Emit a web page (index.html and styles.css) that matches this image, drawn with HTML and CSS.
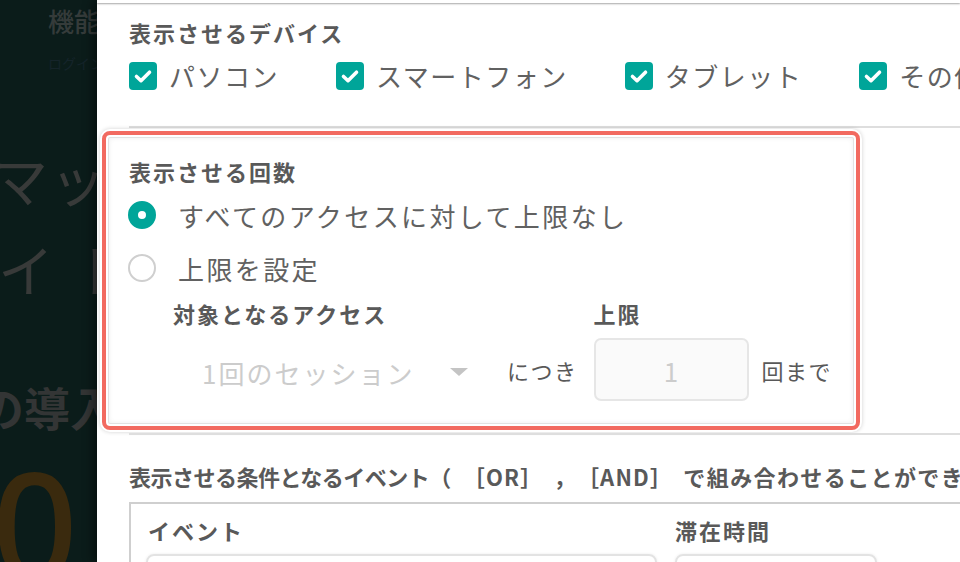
FILE: index.html
```html
<!DOCTYPE html>
<html lang="ja">
<head>
<meta charset="utf-8">
<title>表示設定</title>
<link rel="stylesheet" href="styles.css">
</head>
<body>
<div class="backdrop">
  <div class="bg-title">機能</div>
  <div class="bg-sub">ログイン</div>
  <div class="bg-big bg-l1">マッ</div>
  <div class="bg-big bg-l2">イト</div>
  <div class="bg-bold">の導入</div>
  <div class="bg-num">0</div>
</div>
<main class="panel">
  <div class="panel-top"></div>
  <section class="devices">
    <h2 class="heading">表示させるデバイス</h2>
    <div class="check-row">
      <label class="check"><svg class="box" viewBox="0 0 28 28"><rect width="28" height="28" rx="4"/><path d="M7.5 14.5l4.5 4.2 8.5-8.5"/></svg><span>パソコン</span></label>
      <label class="check"><svg class="box" viewBox="0 0 28 28"><rect width="28" height="28" rx="4"/><path d="M7.5 14.5l4.5 4.2 8.5-8.5"/></svg><span>スマートフォン</span></label>
      <label class="check"><svg class="box" viewBox="0 0 28 28"><rect width="28" height="28" rx="4"/><path d="M7.5 14.5l4.5 4.2 8.5-8.5"/></svg><span>タブレット</span></label>
      <label class="check"><svg class="box" viewBox="0 0 28 28"><rect width="28" height="28" rx="4"/><path d="M7.5 14.5l4.5 4.2 8.5-8.5"/></svg><span>その他</span></label>
    </div>
  </section>
  <section class="count">
    <h2 class="heading">表示させる回数</h2>
    <div class="radio-row"><span class="radio on"></span><span>すべてのアクセスに対して上限なし</span></div>
    <div class="radio-row second"><span class="radio"></span><span>上限を設定</span></div>
    <div class="limit">
      <div class="field">
        <h3 class="heading">対象となるアクセス</h3>
        <div class="select"><span>1回のセッション</span><span class="caret"></span></div>
      </div>
      <span class="unit">につき</span>
      <div class="field">
        <h3 class="heading">上限</h3>
        <div class="num">1</div>
      </div>
      <span class="unit">回まで</span>
    </div>
  </section>
  <div class="sep"></div>
  <section class="events">
    <h2 class="heading wide">表示させる条件となるイベント<span class="ops">（ ［OR］ ，［AND］ </span><span class="tail">で組み合わせることができます）</span></h2>
    <div class="table">
      <div class="cols">
        <div class="col c1"><h3 class="heading">イベント</h3><div class="cell"></div></div>
        <div class="col c2"><h3 class="heading">滞在時間</h3><div class="cell"></div></div>
      </div>
    </div>
  </section>
</main>
</body>
</html>
```

FILE: styles.css
```css
* { box-sizing: border-box; }
html, body { margin: 0; padding: 0; }
body {
  width: 960px;
  height: 562px;
  overflow: hidden;
  display: flex;
  background: #0b1c1a;
  font-family: "Noto Sans CJK JP", "Noto Sans", sans-serif;
  text-spacing-trim: space-all;
}
.backdrop {
  width: 97px;
  flex: none;
  overflow: hidden;
  display: flex;
  flex-direction: column;
  color: #353b3a;
}
.bg-title {
  margin: 2px 0 0 48px;
  font-size: 26px;
  line-height: 38px;
  white-space: nowrap;
  font-weight: 500;
}
.bg-sub {
  margin: 14px 0 0 48px;
  font-size: 14px;
  line-height: 18px;
  color: #15242a;
  white-space: nowrap;
}
.bg-big {
  font-size: 56px;
  line-height: 84px;
  white-space: nowrap;
  margin-left: -8px;
  letter-spacing: 2px;
  color: #383a39;
}
.bg-l1 { margin-top: 64px; }
.bg-l2 { margin-top: 6px; margin-left: -2px; letter-spacing: 20px; }
.bg-bold {
  margin: 66px 0 0 -22px;
  font-size: 46px;
  line-height: 60px;
  font-weight: 700;
  white-space: nowrap;
  color: #333535;
}
.bg-num {
  margin: 12px 0 0 -8px;
  font-family: "Noto Sans", sans-serif;
  font-size: 150px;
  line-height: 150px;
  font-weight: 500;
  color: #3a2a0e;
}
.panel {
  flex: 1;
  background: #fff;
  box-shadow: -4px 0 10px rgba(0,0,0,.45);
  overflow: hidden;
  position: relative;
  padding-left: 32px;
  color: #616161;
}
.panel-top {
  height: 3px;
  margin-left: -32px;
  box-shadow: 0 1px 2px rgba(0,0,0,.35);
}
.heading {
  margin: 0;
  font-size: 22px;
  line-height: 30px;
  font-weight: 700;
  letter-spacing: 2px;
  color: #595959;
  white-space: nowrap;
}
.devices {
  padding-top: 14px;
  padding-bottom: 30px;
  border-bottom: 2px solid #dedede;
}
.check-row {
  margin-top: 9px;
  display: flex;
  align-items: center;
  height: 40px;
  white-space: nowrap;
}
.check {
  display: flex;
  align-items: center;
  gap: 12px;
  margin-right: 57px;
  font-size: 26px;
  line-height: 40px;
  letter-spacing: 1.5px;
  flex: none;
}
.box { width: 28px; height: 28px; flex: none; }
.box rect { fill: #00a599; }
.box path { fill: none; stroke: #fff; stroke-width: 3.6; stroke-linecap: round; stroke-linejoin: round; }

.count {
  margin: 3px 0 0 -27px;
  width: 758px;
  border: 4px solid #f26a60;
  border-radius: 8px;
  padding: 21px 0 25px 23px;
  box-shadow:
    inset 0 0 0 2px #fff,
    inset 0 0 0 3px #e2e2e2,
    inset 0 0 5px 3px rgba(0,0,0,.07),
    0 0 0 2px #fff,
    0 0 4px 2px rgba(0,0,0,.18);
}
.radio-row {
  margin-top: 9px;
  display: flex;
  align-items: center;
  gap: 22px;
  height: 40px;
  font-size: 26px;
  letter-spacing: 2.4px;
}
.radio-row.second { margin-top: 13px; }
.radio {
  width: 28px;
  height: 28px;
  border-radius: 50%;
  border: 2px solid #cfcfcf;
  flex: none;
  margin-left: -1px;
}
.radio.on {
  border: 10px solid #00a599;
  background: #fff;
}
.limit {
  margin: 10px 0 0 44px;
  display: flex;
  align-items: flex-end;
}
.field { display: flex; flex-direction: column; gap: 10px; }
.select {
  width: 317px;
  height: 63px;
  display: flex;
  align-items: center;
  padding: 5px 22px 0 29px;
  font-size: 26px;
  letter-spacing: 2px;
  color: #cccccc;
}
.caret {
  margin-left: auto;
  width: 0;
  height: 0;
  border-left: 9px solid transparent;
  border-right: 9px solid transparent;
  border-top: 8px solid #c4c4c4;
}
.unit {
  height: 63px;
  display: flex;
  align-items: center;
  font-size: 22px;
  letter-spacing: 1.5px;
  color: #595959;
}
.limit > .unit:nth-child(2) { margin: 0 16px 0 17px; }
.limit > .unit:last-child { margin-left: 13px; }
.num {
  width: 155px;
  height: 63px;
  border: 2px solid #e6e6e6;
  border-radius: 7px;
  background: #fafafa;
  display: flex;
  align-items: center;
  justify-content: center;
  padding-top: 2px;
  font-size: 26px;
  color: #cccccc;
}
.sep {
  margin-top: 3px;
  height: 2px;
  background: #dedede;
}
.events { padding-top: 26px; }
.heading.wide { letter-spacing: -0.5px; }
.ops { letter-spacing: 1.2px; word-spacing: 4px; }
.tail { letter-spacing: 1.4px; }
.table {
  margin-top: 11px;
  width: 900px;
  border: 2px solid #cfcfcf;
  border-bottom: none;
  padding: 11px 0 0 17px;
  height: 80px;
}
.cols { display: flex; gap: 18px; }
.col { display: flex; flex-direction: column; gap: 9px; }
.c1 { width: 511px; margin-left: -2px; }
.c1 .heading { margin-left: 2px; }
.c2 { width: 202px; }
.cell {
  height: 40px;
  border: 2px solid #e3e3e3;
  border-radius: 8px;
  box-shadow: 0 0 3px rgba(0,0,0,.08);
}
```
